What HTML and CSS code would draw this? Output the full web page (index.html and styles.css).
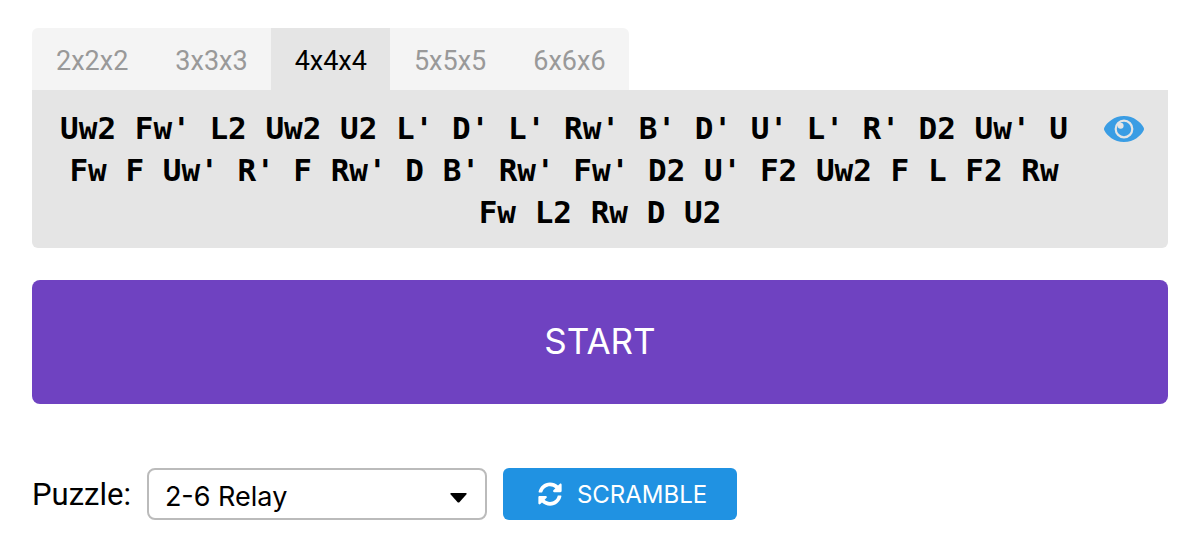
FILE: index.html
```html
<!DOCTYPE html>
<html lang="en">
<head>
<meta charset="utf-8">
<title>Puzzle timer</title>
<link rel="stylesheet" href="styles.css">
</head>
<body>
<main class="timer">
  <section class="scramble-card">
    <div class="tabs" role="tablist">
      <button class="tab" role="tab">2x2x2</button>
      <button class="tab" role="tab">3x3x3</button>
      <button class="tab tab-active" role="tab" aria-selected="true">4x4x4</button>
      <button class="tab" role="tab">5x5x5</button>
      <button class="tab" role="tab">6x6x6</button>
    </div>
    <div class="scramble">
      <button class="preview" aria-label="Show scramble preview">
        <svg width="40" height="26" viewBox="0 0 40 26" aria-hidden="true">
          <path fill="#3a9de4" d="M20 0C30 0 37 6.500 39.600 11.500Q40.400 13 39.600 14.500C37 19.500 30 26 20 26S3 19.500.4 14.500Q-.4 13 .4 11.500C3 6.500 10 0 20 0Z"/>
          <circle cx="20" cy="13" r="8.300" fill="none" stroke="#e5e5e5" stroke-width="2.200"/>
          <circle cx="16.600" cy="9.800" r="3" fill="#e5e5e5"/>
        </svg>
      </button>
      <p class="moves">Uw2 Fw' L2 Uw2 U2 L' D' L' Rw' B' D' U' L' R' D2 Uw' U Fw F Uw' R' F Rw' D B' Rw' Fw' D2 U' F2 Uw2 F L F2 Rw Fw L2 Rw D U2</p>
    </div>
  </section>
  <button class="start">START</button>
  <div class="controls">
    <label class="label" for="puzzle">Puzzle:</label>
    <div class="select-wrap">
      <select class="select" id="puzzle"><option>2-6 Relay</option></select>
      <svg class="caret" width="17" height="10" viewBox="0 0 17 10" aria-hidden="true"><path d="M1.200 0H15.800Q17.300.3 16.300 1.600L9.600 9Q8.500 10.200 7.400 9L.7 1.600Q-.3.3 1.200 0Z"/></svg>
    </div>
    <button class="scramble-button">
      <svg width="24" height="24" viewBox="0 0 512 512" aria-hidden="true"><path fill="#fff" d="M370.720 133.280C339.458 104.008 298.888 87.962 255.848 88c-77.458.068-144.328 53.178-162.791 126.850-1.344 5.363-6.122 9.150-11.651 9.150H24.103c-7.498 0-13.194-6.807-11.807-14.176C33.933 94.924 134.813 8 256 8c66.448 0 126.791 26.136 171.315 68.685L463.030 40.970C478.149 25.851 504 36.559 504 57.941V192c0 13.255-10.745 24-24 24H345.941c-21.382 0-32.090-25.851-16.971-40.971l41.750-41.749zM32 296h134.059c21.382 0 32.090 25.851 16.971 40.971l-41.750 41.750c31.262 29.273 71.835 45.319 114.876 45.280 77.418-.070 144.315-53.144 162.787-126.849 1.344-5.363 6.122-9.150 11.651-9.150h57.304c7.498 0 13.194 6.807 11.807 14.176C478.067 417.076 377.187 504 256 504c-66.448 0-126.791-26.136-171.315-68.685L48.970 471.030C33.851 486.149 8 475.441 8 454.059V320c0-13.255 10.745-24 24-24z"/></svg>
      <span>SCRAMBLE</span>
    </button>
  </div>
</main>
</body>
</html>
```
FILE: styles.css
```css
* { box-sizing: border-box; }
body {
  margin: 0;
  background: #fff;
  color: #000;
  font-family: Inter, sans-serif;
}
button {
  margin: 0;
  padding: 0;
  border: 0;
  background: none;
  color: inherit;
  font: inherit;
}
.timer { padding: 28px 32px; }
.tabs {
  display: inline-flex;
  vertical-align: top;
  overflow: hidden;
  border-radius: 6px 6px 0 0;
  background: #f4f4f4;
}
.tab {
  padding: 4px 23px 0 24px;
  color: #999;
  font: 27px/58px Roboto, sans-serif;
}
.tab-active { background: #e5e5e5; color: #000; }
.scramble {
  padding: 17px 16px 15px;
  border-radius: 0 0 6px 6px;
  background: #e5e5e5;
}
.moves {
  margin: 0;
  text-align: center;
  font: bold 31px/42px "DejaVu Sans Mono", monospace;
}
.preview {
  display: flex;
  align-items: center;
  float: right;
  height: 44px;
  margin: 0 8px 0 24px;
}
.start {
  display: block;
  width: 100%;
  margin: 32px 0 64px;
  padding-bottom: 2px;
  border-radius: 8px;
  background: #6f42c1;
  color: #fff;
  font-size: 35px;
  line-height: 122px;
}
.controls { display: flex; align-items: center; gap: 16px; }
.label { padding-top: 2px; font: 31px/50px Roboto, sans-serif; }
.select-wrap { position: relative; width: 340px; }
.select {
  display: block;
  width: 100%;
  height: 52px;
  padding: 4px 48px 0 16px;
  border: 2px solid #bbb;
  border-radius: 8px;
  appearance: none;
  background: #fff;
  color: #000;
  font: 27px Inter, sans-serif;
}
.caret { position: absolute; right: 20px; top: 25px; pointer-events: none; }
.scramble-button {
  display: flex;
  align-items: center;
  gap: 15px;
  height: 52px;
  padding: 0 30px 0 35px;
  border-radius: 6px;
  background: #2092e2;
  color: #fff;
  font-size: 24px;
}
```
